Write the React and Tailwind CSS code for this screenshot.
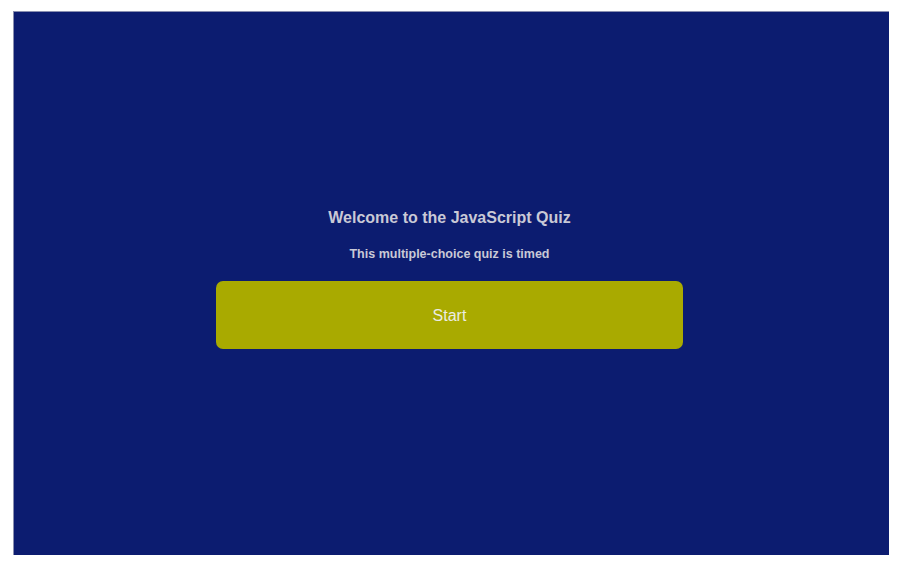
import React from 'react';

export default function App() {
  return (
    <div className="w-[900px] h-[570px] bg-white pl-[13px] pt-[11px]" style={{ fontFamily: '"Liberation Sans", Arial, sans-serif' }}>
      <div className="w-[876px] h-[544px] bg-[#0c1c70] border-l border-t border-[#8a8fb0] border-r-[#0a1460] border-b-[#06105a] flex flex-col items-center pt-[195px] pr-[4px]">
        <h1 className="text-[16px] leading-[21px] font-bold text-[#c9c9d6]">Welcome to the JavaScript Quiz</h1>
        <p className="mt-[18px] text-[12.5px] leading-[16px] font-bold text-[#c9c9d6]">This multiple-choice quiz is timed</p>
        <button className="mt-[19px] w-[467px] h-[68px] rounded-[7px] bg-[#a9aa00] text-[#ecece4] text-[16px] pt-[2px]">
          Start
        </button>
      </div>
    </div>
  );
}
